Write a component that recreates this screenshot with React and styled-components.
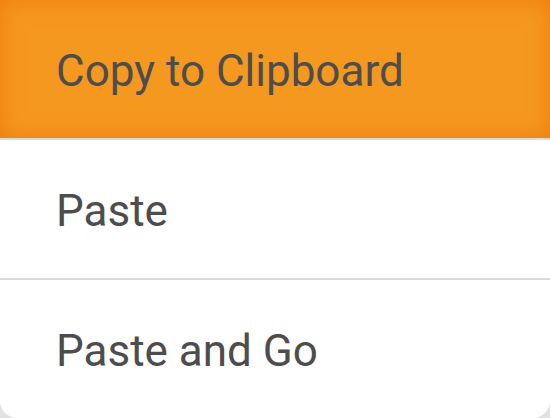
import React from "react";
import styled, { createGlobalStyle } from "styled-components";

const GlobalStyle = createGlobalStyle`
  html, body {
    margin: 0;
    padding: 0;
    background: #e2e2e2;
  }
  body {
    font-family: Roboto, "Noto Sans", Arial, sans-serif;
  }
`;

const Menu = styled.div`
  width: 550px;
  height: 418px;
  display: flex;
  flex-direction: column;
  background: #ffffff;
  border-radius: 0 0 18px 18px;
  overflow: hidden;
`;

const Item = styled.div`
  flex: 1;
  display: flex;
  align-items: center;
  padding-left: 56px;
  padding-top: 3px;
  font-size: 44px;
  color: #4d4d4d;
  background: ${props => (props.active ? "#f5981f" : "#ffffff")};
  box-shadow: ${props => (props.active ? "inset 0 0 22px #ef7c0e" : "none")};
  border-top: ${props => (props.first ? "none" : "2px solid #dadada")};
`;

const items = ["Copy to Clipboard", "Paste", "Paste and Go"];

const App = () => (
  <>
    <GlobalStyle />
    <Menu>
      {items.map((label, i) => (
        <Item key={label} active={i === 0} first={i === 0}>
          {label}
        </Item>
      ))}
    </Menu>
  </>
);

export default App;
